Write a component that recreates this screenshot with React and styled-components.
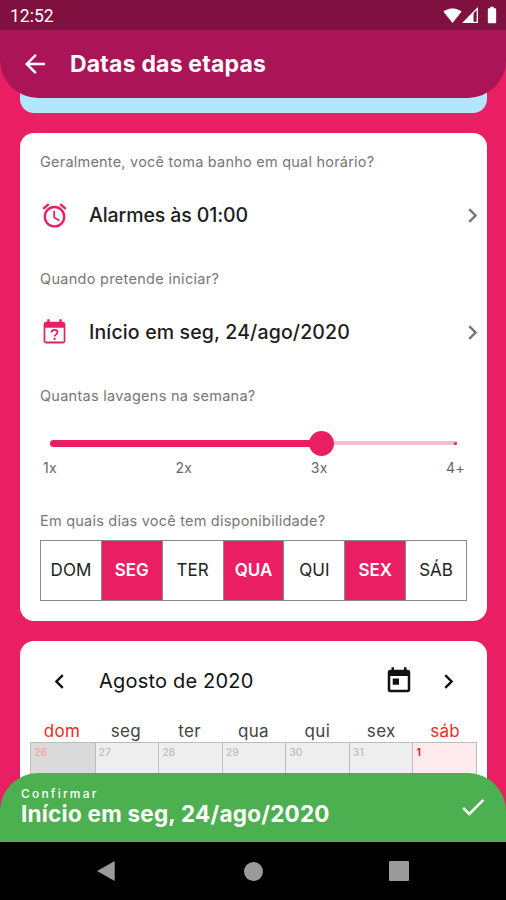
import React from 'react';
import styled, { createGlobalStyle } from 'styled-components';
import {
  MdAccessAlarm,
  MdArrowBack,
  MdBatteryFull,
  MdCheck,
  MdChevronLeft,
  MdChevronRight,
  MdSignalWifi4Bar,
  MdToday,
} from 'react-icons/md';

const PINK = '#e91e63';

const days = [
  { name: 'DOM' },
  { name: 'SEG', on: true },
  { name: 'TER' },
  { name: 'QUA', on: true },
  { name: 'QUI' },
  { name: 'SEX', on: true },
  { name: 'SÁB' },
];

const calendar = [
  { name: 'dom', date: 26, weekend: true, past: true },
  { name: 'seg', date: 27, past: true },
  { name: 'ter', date: 28, past: true },
  { name: 'qua', date: 29, past: true },
  { name: 'qui', date: 30, past: true },
  { name: 'sex', date: 31, past: true },
  { name: 'sáb', date: 1, weekend: true },
];

const CellSignal = () => (
  <svg width="17" height="17" viewBox="0 0 17 17">
    <path d="M15.3 1.5V15.3H1.6Z" fill="none" stroke="#fff" strokeWidth="1.3" />
    <path d="M11.5 5.2V15.5H1.2Z" fill="#fff" />
  </svg>
);

const CalendarQuestion = () => (
  <svg width="29" height="29" viewBox="0 0 24 24" fill={PINK}>
    <path d="M6 1V3H5C3.89 3 3 3.89 3 5V19C3 20.1 3.9 21 5 21H19C20.1 21 21 20.1 21 19V5C21 3.9 20.1 3 19 3H18V1H16V3H8V1H6ZM4.4 8H19.6V19.5H4.4V8Z" />
    <path
      d="M9.6 11.9C9.6 9.2 14.5 9.2 14.5 11.9C14.5 13.5 12.1 13.6 12.1 15.4"
      fill="none"
      stroke={PINK}
      strokeWidth="1.5"
    />
    <circle cx="12.1" cy="17.3" r="0.95" />
  </svg>
);

const App = () => (
  <Screen>
    <GlobalStyle />
    <StatusBar>
      <Clock>12:52</Clock>
      <StatusIcons>
        <MdSignalWifi4Bar size={19} />
        <CellSignal />
        <Battery size={20} />
      </StatusIcons>
    </StatusBar>

    <Header>
      <MdArrowBack size={30} />
      <Title>Datas das etapas</Title>
    </Header>

    <Content>
      <InfoCard />

      <FormCard>
        <Question>Geralmente, você toma banho em qual horário?</Question>
        <Option>
          <MdAccessAlarm size={29} color={PINK} />
          <OptionText $spacing="-0.1px">Alarmes às 01:00</OptionText>
          <MdChevronRight size={29} color="#777" />
        </Option>

        <Question $spacing="0.3px">Quando pretende iniciar?</Question>
        <Option>
          <CalendarQuestion />
          <OptionText $spacing="0.15px">Início em seg, 24/ago/2020</OptionText>
          <MdChevronRight size={29} color="#777" />
        </Option>

        <Question $spacing="0.27px">Quantas lavagens na semana?</Question>
        <Slider>
          <Filled />
          <Thumb />
          <Rest />
          <EndDot />
        </Slider>
        <Ticks>
          <span>1x</span>
          <span>2x</span>
          <span>3x</span>
          <span>4+</span>
        </Ticks>

        <Question>Em quais dias você tem disponibilidade?</Question>
        <Days>
          {days.map(day => (
            <Day key={day.name} $on={day.on}>{day.name}</Day>
          ))}
        </Days>
      </FormCard>

      <CalendarCard>
        <MonthBar>
          <MdChevronLeft size={29} />
          <Month>Agosto de 2020</Month>
          <MdToday size={30} />
          <MdChevronRight size={29} />
        </MonthBar>
        <Week>
          {calendar.map(day => (
            <Weekday key={day.name} $weekend={day.weekend}>{day.name}</Weekday>
          ))}
        </Week>
        <Dates>
          {calendar.map(day => (
            <DateCell key={day.date} $weekend={day.weekend} $past={day.past}>
              {day.date}
            </DateCell>
          ))}
        </Dates>
      </CalendarCard>
    </Content>

    <ConfirmBar>
      <div>
        <ConfirmLabel>Confirmar</ConfirmLabel>
        <ConfirmText>Início em seg, 24/ago/2020</ConfirmText>
      </div>
      <MdCheck size={30} />
    </ConfirmBar>

    <NavBar>
      <svg width="20" height="22" viewBox="0 0 20 22">
        <path d="M1 11L18.7 1V21Z" fill="#9a9a9a" />
      </svg>
      <NavHome />
      <NavRecent />
    </NavBar>
  </Screen>
);

export default App;

const GlobalStyle = createGlobalStyle`
  * {
    box-sizing: border-box;
  }
  body {
    margin: 0;
    font-family: Inter, "Liberation Sans", sans-serif;
  }
  svg {
    display: block;
    flex: none;
  }
`;

const Screen = styled.div`
  display: flex;
  flex-direction: column;
  width: 506px;
  height: 900px;
  overflow: hidden;
  background-color: ${PINK};
`;

const StatusBar = styled.div`
  display: flex;
  justify-content: space-between;
  align-items: center;
  flex: none;
  height: 30px;
  padding: 0 4px 0 10px;
  color: white;
  background-color: #7f1040;
`;

const Clock = styled.span`
  font-family: Roboto, sans-serif;
  font-size: 17.5px;
  padding-top: 2px;
`;

const StatusIcons = styled.div`
  display: flex;
  align-items: center;
`;

const Battery = styled(MdBatteryFull)`
  margin-left: 3px;
`;

/* the rounded bars overlap the scrolling content by their radius */
const Header = styled.header`
  display: flex;
  align-items: center;
  flex: none;
  gap: 20px;
  height: 68px;
  margin-bottom: -38px;
  padding: 0 20px;
  color: white;
  background-color: #ab1457;
  border-radius: 0 0 38px 38px;
  z-index: 1;
`;

const Title = styled.h1`
  margin: 0 0 1px;
  font-size: 23px;
  font-weight: 700;
  letter-spacing: 0.2px;
`;

const Content = styled.main`
  display: flex;
  flex-direction: column;
  flex: 1;
  gap: 20px;
  min-height: 0;
  padding: 0 19px 0 20px;
  overflow: hidden;
`;

const Card = styled.section`
  flex: none;
  border-radius: 14px;
  background-color: white;
`;

const InfoCard = styled(Card)`
  height: 52.5px;
  background-color: #b3e5fc;
`;

const FormCard = styled(Card)`
  height: 488.5px;
  padding: 19px 20px 0;
`;

const Question = styled.p`
  height: 20px;
  margin: 0;
  font-size: 14.5px;
  line-height: 20px;
  letter-spacing: ${props => props.$spacing || '0.22px'};
  white-space: nowrap;
  color: #777;
`;

const Option = styled.div`
  display: flex;
  align-items: center;
  height: 88px;
  margin: 0 -19.5px 9px 0;
  padding-bottom: 1px;
`;

const OptionText = styled.span`
  flex: 1;
  margin-left: 20px;
  font-size: 19.5px;
  font-weight: 500;
  line-height: 24px;
  letter-spacing: ${props => props.$spacing};
  color: #1c1c1c;
`;

const Slider = styled.div`
  display: flex;
  align-items: center;
  height: 25px;
  margin: 25px 10px 0;
`;

const Filled = styled.div`
  width: 264px;
  height: 7px;
  margin-right: -5px;
  border-radius: 4px;
  background-color: ${PINK};
`;

const Thumb = styled.div`
  width: 25px;
  height: 25px;
  border-radius: 50%;
  background-color: ${PINK};
`;

const Rest = styled.div`
  flex: 1;
  height: 4px;
  background-color: #f9bbd0;
`;

const EndDot = styled.div`
  width: 3px;
  height: 3px;
  margin-left: -3px;
  border-radius: 50%;
  background-color: ${PINK};
`;

const Ticks = styled.div`
  display: flex;
  justify-content: space-between;
  height: 20px;
  margin: 2px 2px 33px 3px;
  font-size: 14px;
  line-height: 20px;
  letter-spacing: 0.3px;
  color: #666;
`;

const Days = styled.div`
  display: flex;
  height: 61px;
  margin-top: 9px;
  border: 1px solid #8a8a8a;
`;

const Day = styled.div`
  display: flex;
  flex: 1 1 0;
  justify-content: center;
  align-items: center;
  font-size: 17px;
  font-weight: ${props => (props.$on ? 600 : 400)};
  color: ${props => (props.$on ? 'white' : '#222')};
  background-color: ${props => (props.$on ? PINK : 'white')};

  & + & {
    border-left: 1px solid #8a8a8a;
  }
`;

const CalendarCard = styled(Card)`
  height: 260px;
  padding: 0 10px;
`;

const MonthBar = styled.div`
  display: flex;
  align-items: center;
  height: 80px;
  padding: 0 14px 0 15px;
  color: #111;
`;

const Month = styled.span`
  flex: 1;
  margin-left: 25px;
  font-size: 20px;
  letter-spacing: 0.2px;

  & + svg {
    margin-right: 20px;
  }
`;

const Week = styled.div`
  display: grid;
  grid-template-columns: repeat(7, 1fr);
  height: 21px;
`;

const Weekday = styled.span`
  font-size: 17px;
  line-height: 21px;
  letter-spacing: 0.3px;
  text-align: center;
  color: ${props => (props.$weekend ? '#f02a1d' : '#444')};
`;

const Dates = styled.div`
  display: grid;
  grid-template-columns: repeat(7, 1fr);
  height: 63px;
  border: 1px solid #bdbdbd;
`;

const cellColor = ({ $weekend, $past }) => {
  if (!$past) return '#ffebee';
  return $weekend ? '#dadada' : '#eeeeee';
};

const dateColor = ({ $weekend, $past }) => {
  if (!$past) return '#f02a1d';
  return $weekend ? '#f5a3a3' : '#bdbdbd';
};

const DateCell = styled.div`
  padding: 3px 3px;
  font-size: 10.5px;
  font-weight: ${props => (props.$past ? 500 : 700)};
  color: ${dateColor};
  background-color: ${cellColor};

  & + & {
    border-left: 1px solid #bdbdbd;
  }
`;

const ConfirmBar = styled.footer`
  display: flex;
  justify-content: space-between;
  align-items: center;
  flex: none;
  height: 69.5px;
  margin-top: -38px;
  padding: 0 18px 0 21px;
  color: white;
  background-color: #4caf50;
  border-radius: 38px 38px 0 0;
  z-index: 1;
`;

const ConfirmLabel = styled.div`
  font-size: 12px;
  font-weight: 500;
  line-height: 14px;
  letter-spacing: 2.2px;
`;

const ConfirmText = styled.div`
  font-size: 22.5px;
  font-weight: 700;
  line-height: 26px;
  letter-spacing: 0.23px;
`;

const NavBar = styled.nav`
  display: flex;
  justify-content: space-between;
  align-items: center;
  flex: none;
  height: 58px;
  padding: 0 97px 0 96px;
  background-color: black;
`;

const NavHome = styled.div`
  width: 19px;
  height: 19px;
  margin-left: 2px;
  border-radius: 50%;
  background-color: #9a9a9a;
`;

const NavRecent = styled.div`
  width: 20px;
  height: 20px;
  border-radius: 1px;
  background-color: #9a9a9a;
`;
